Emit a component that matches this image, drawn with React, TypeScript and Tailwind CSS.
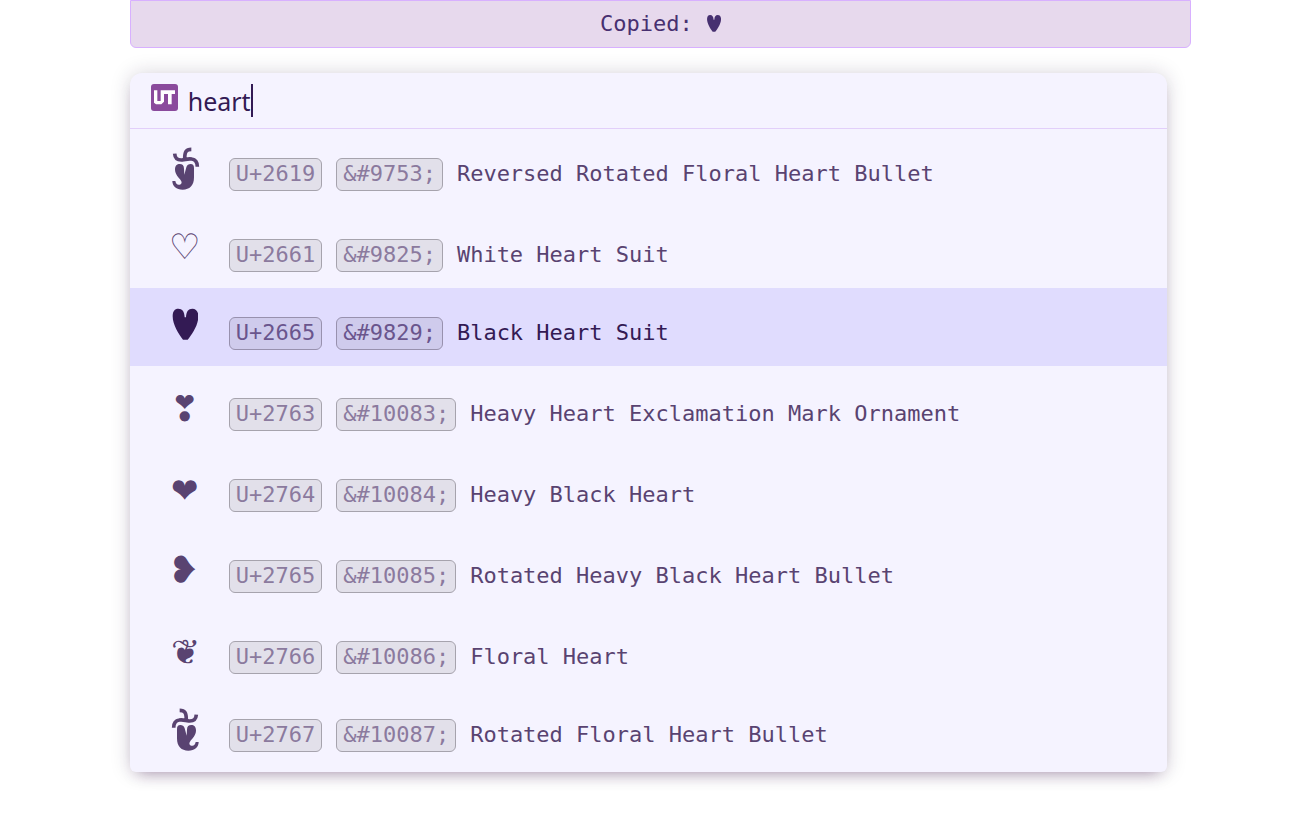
import { useState } from "react";

type Entry = { char: string; code: string; entity: string; name: string };

const ENTRIES: Entry[] = [
  { char: "☙", code: "U+2619", entity: "&#9753;", name: "Reversed Rotated Floral Heart Bullet" },
  { char: "♡", code: "U+2661", entity: "&#9825;", name: "White Heart Suit" },
  { char: "♥", code: "U+2665", entity: "&#9829;", name: "Black Heart Suit" },
  { char: "❣", code: "U+2763", entity: "&#10083;", name: "Heavy Heart Exclamation Mark Ornament" },
  { char: "❤", code: "U+2764", entity: "&#10084;", name: "Heavy Black Heart" },
  { char: "❥", code: "U+2765", entity: "&#10085;", name: "Rotated Heavy Black Heart Bullet" },
  { char: "❦", code: "U+2766", entity: "&#10086;", name: "Floral Heart" },
  { char: "❧", code: "U+2767", entity: "&#10087;", name: "Rotated Floral Heart Bullet" },
];

const DRAWN = ["☙", "♥", "❧"];

function Heart({ className }: { className: string }) {
  return (
    <svg viewBox="0 0 81 99" className={className} role="img" aria-label="♥" fill="currentColor">
      <path d="M36 98 C24 82 5 54 5 28 C5 13 11 5 22 5 C34 5 40 13 41 31 L45 31 C46 13 52 5 64 5 C75 5 82 13 82 28 C82 54 63 82 50 98 Z" />
    </svg>
  );
}

function Floral({ label, flip }: { label: string; flip?: boolean }) {
  return (
    <svg
      viewBox="0 0 81 99"
      className="inline-block h-[33px] w-[27px] overflow-visible align-baseline"
      role="img"
      aria-label={label}
    >
      <g transform={flip ? "translate(85 0) scale(-1 1)" : "translate(2 0)"}>
        <path
          d="M59 4 C43 4 39 11 39 34 M9 17 C10 31 16 37 32 36 C44 34 50 31 60 33 C73 35 77 42 77 56"
          fill="none"
          stroke="currentColor"
          strokeWidth="11"
        />
        <path
          d="M10 64 C10 53 16 48 24 48 C32 48 37 52 37 62 L38 80 L44 58 C46 51 51 48 57 48 C64 48 67 52 67 60 V88 C67 113 54 125 33 125 C14 125 2 114 2 99 H11 C12 106 16 110 21 110 C29 110 32 104 28 98 C21 88 10 80 10 64 Z"
          fill="currentColor"
        />
      </g>
    </svg>
  );
}

function Glyph({ char }: { char: string }) {
  if (!DRAWN.includes(char)) return <>{char}</>;
  if (char === "♥") return <Heart className="inline-block h-[33px] w-[27px] align-baseline" />;
  return <Floral label={char} flip={char === "❧"} />;
}

function Logo() {
  return (
    <svg viewBox="0 0 81 81" className="size-[27px] shrink-0" role="img" aria-label="UT">
      <rect width="81" height="81" rx="9" fill="#8a4a9c" />
      <path d="M9 19 H19 V51 H29 V19 H72 V30 H62 V61 H51 V30 H39 V53 L31 61 H15 L9 56 Z" fill="#fff" />
    </svg>
  );
}

export default function App() {
  const [selected, setSelected] = useState(2);
  const [query, setQuery] = useState("heart");

  return (
    <div className="min-h-screen bg-white pb-10 font-['DejaVu_Sans_Mono',monospace] text-[22px]">
      <div
        role="status"
        className="mx-[10%] flex h-12 w-[calc(80%+24px)] items-center justify-center rounded-b-md border border-[#d8b0ff] bg-[#e7d9ed] pb-0.5 text-[#473070]"
      >
        <span className="whitespace-pre">Copied: </span>
        <Heart className="h-[18px] w-[15px]" />
      </div>

      <main className="mx-[10%] mt-[25px] rounded-t-xl rounded-b-md bg-[#f5f3ff] shadow-[0_0_20px_rgba(40,20,60,0.18),0_8px_16px_-8px_rgba(70,20,80,0.4)]">
        <div className="flex h-14 items-center border-b border-[#e2cffa] px-[21px] text-[#331a54]">
          <div className="pb-1.5">
            <Logo />
          </div>
          <input
            aria-label="Search symbols"
            value={query}
            onChange={(e) => setQuery(e.target.value)}
            className="ml-2.5 h-9 [field-sizing:content] bg-transparent pt-0.5 font-['Noto_Sans',sans-serif] text-[25px] outline-none"
          />
          <span aria-hidden="true" className="h-[33px] w-0.5 bg-[#331a54]" />
        </div>

        <ul className="pb-1">
          {ENTRIES.map((entry, i) => {
            const active = i === selected;
            return (
              <li key={entry.code}>
                <button
                  type="button"
                  onClick={() => setSelected(i)}
                  className={`flex w-full items-baseline pr-4 pl-[41px] text-left ${
                    DRAWN.includes(entry.char) ? "h-[78px] pt-[15px]" : "h-[81px] pt-[18px]"
                  } ${active ? "bg-[#e0dcfe] text-[#331a54]" : "text-[#594371]"}`}
                >
                  <span className="mr-[30px] w-7 shrink-0 text-center text-[43px] leading-[45px]">
                    <Glyph char={entry.char} />
                  </span>
                  {[entry.code, entry.entity].map((label) => (
                    <span
                      key={label}
                      className={`mr-3.5 rounded-md border px-1.5 pb-0.5 leading-[29px] ${
                        active
                          ? "border-[#9891ae] bg-[#cfcbec] text-[#6a558d]"
                          : "border-[#a6a3ad] bg-[#e2e0ea] text-[#8b7a9e]"
                      }`}
                    >
                      {label}
                    </span>
                  ))}
                  <span>{entry.name}</span>
                </button>
              </li>
            );
          })}
        </ul>
      </main>
    </div>
  );
}
